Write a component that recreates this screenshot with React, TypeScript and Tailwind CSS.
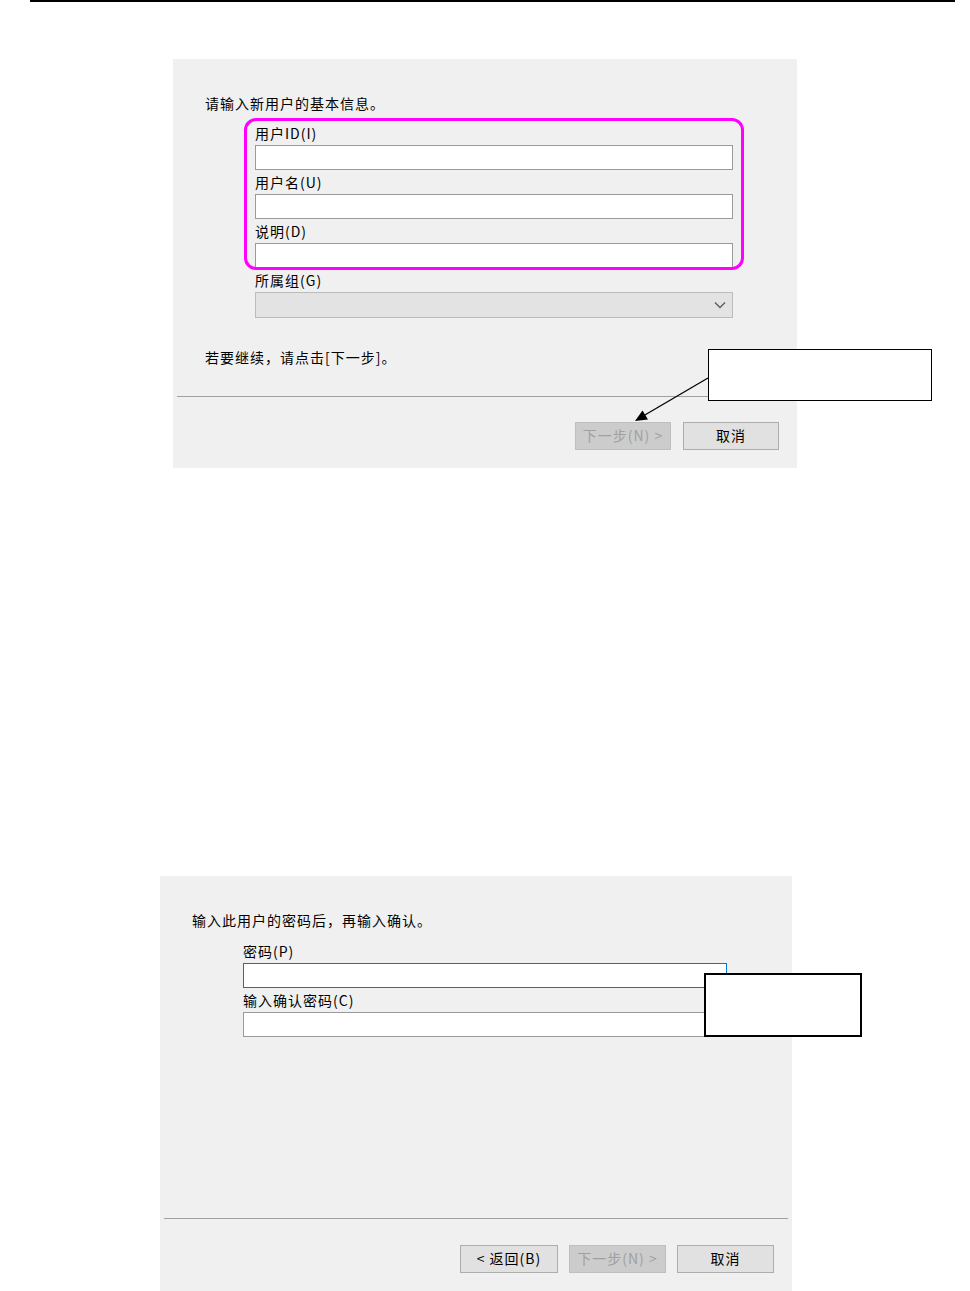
import type { ReactNode } from "react";

const Field = ({ label, focused = false }: { label: string; focused?: boolean }) => (
  <>
    <p className="h-[24px] leading-[24px]">{label}</p>
    <input
      type="text"
      readOnly
      className={`block h-[25px] w-full border bg-white outline-none ${
        focused ? "border-[#0078d7]" : "border-[#9a9a9a]"
      }`}
    />
  </>
);

const Button = ({ children, disabled = false, width = "w-[96px]" }: { children: ReactNode; disabled?: boolean; width?: string }) => (
  <button
    type="button"
    className={`flex h-[28px] items-center justify-center border pb-[2px] leading-none ${width} ${
      disabled
        ? "border-[#bfbfbf] bg-[#cccccc] text-[#a0a0a0]"
        : "border-[#adadad] bg-[#e1e1e1] text-black"
    }`}
  >
    {children}
  </button>
);

const App = () => {
  return (
    <div className="relative h-[1291px] w-[970px] overflow-hidden bg-white font-['Noto_Sans_CJK_SC','Noto_Sans',sans-serif] text-[14px] tracking-[1px] text-black">
      <div className="ml-[30px] h-[2px] w-[925px] bg-black" />

      {/* Step 1: basic info */}
      <div className="relative ml-[173px] mt-[57px] h-[409px] w-[624px] bg-[#f0f0f0]">
        <p className="pl-[32px] pt-[32px] leading-[24px]">请输入新用户的基本信息。</p>

        <div className="ml-[82px] mt-[6px] w-[478px]">
          <Field label="用户ID(I)" />
          <Field label="用户名(U)" />
          <Field label="说明(D)" />
          <p className="h-[24px] leading-[24px]">所属组(G)</p>
          <div className="flex h-[26px] items-center justify-end border border-[#bcbcbc] bg-[#e3e3e3] pr-[6px]">
            <svg width="12" height="8" viewBox="0 0 12 8" fill="none">
              <path d="M1 1.5 L6 6.5 L11 1.5" stroke="#5a5a5a" strokeWidth="1.3" />
            </svg>
          </div>
        </div>

        <p className="mt-[27px] pl-[32px] leading-[24px]">若要继续，请点击[下一步]。</p>

        <div className="mx-[4px] mt-[27px] h-px bg-[#a0a0a0]" />

        <div className="mt-[25px] flex justify-end gap-[12px] pr-[18px]">
          <Button disabled>下一步(N) &gt;</Button>
          <Button>取消</Button>
        </div>

        {/* highlight around the text fields */}
        <div className="pointer-events-none absolute left-[71px] top-[59px] h-[152px] w-[500px] rounded-[12px] border-[3px] border-[#ff00ff]" />

        {/* callout */}
        <div className="absolute left-[535px] top-[290px] h-[52px] w-[224px] border border-black bg-white" />
        <svg className="pointer-events-none absolute left-0 top-0 overflow-visible" width="624" height="409">
          <line x1="535" y1="319" x2="471" y2="356.5" stroke="black" strokeWidth="1.3" />
          <polygon points="462,362 475,360.5 469.5,351.5" fill="black" />
        </svg>
      </div>

      {/* Step 2: password */}
      <div className="relative ml-[160px] mt-[408px] h-[415px] w-[632px] bg-[#f0f0f0]">
        <p className="pl-[32px] pt-[32px] leading-[24px]">输入此用户的密码后，再输入确认。</p>

        <div className="ml-[83px] mt-[7px] w-[484px]">
          <Field label="密码(P)" focused />
          <Field label="输入确认密码(C)" />
        </div>

        <div className="mx-[4px] mt-[181px] h-px bg-[#a0a0a0]" />

        <div className="mt-[26px] flex justify-end gap-[11px] pr-[18px]">
          <Button width="w-[98px]">&lt; 返回(B)</Button>
          <Button disabled width="w-[97px]">下一步(N) &gt;</Button>
          <Button width="w-[97px]">取消</Button>
        </div>

        <div className="absolute left-[544px] top-[97px] h-[64px] w-[158px] border-2 border-black bg-white" />
      </div>
    </div>
  );
};

export default App;
